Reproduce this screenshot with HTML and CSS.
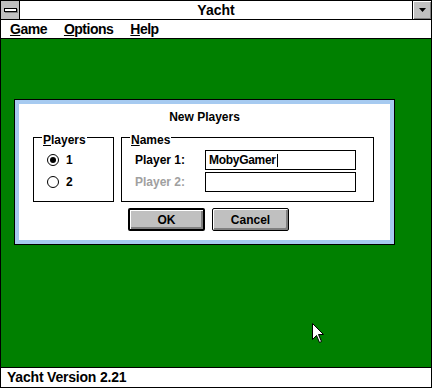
FILE: index.html
```html
<!DOCTYPE html>
<html lang="en">

<head>
    <title>Yacht</title>
    <link rel="stylesheet" href="styles.css">
</head>

<body>

    <div class="window">
        <div class="titlebar">
            <div class="sysbox"><span class="sysbar"></span></div>
            <div class="caption">Yacht</div>
            <div class="minbox">
                <svg width="7" height="4" viewBox="0 0 7 4"><polygon points="0,0 7,0 3.5,4" fill="#000"/></svg>
            </div>
        </div>

        <div class="menubar">
            <span class="menu"><u>G</u>ame</span>
            <span class="menu"><u>O</u>ptions</span>
            <span class="menu"><u>H</u>elp</span>
        </div>

        <div class="client">
            <div class="dialog">
                <div class="dialog-title">New Players</div>

                <div class="groups">
                    <div class="group players">
                        <span class="group-label"><u>P</u>layers</span>
                        <div class="row">
                            <span class="radio checked"></span>
                            <span>1</span>
                        </div>
                        <div class="row">
                            <span class="radio"></span>
                            <span>2</span>
                        </div>
                    </div>

                    <div class="group names">
                        <span class="group-label"><u>N</u>ames</span>
                        <div class="row">
                            <span class="field-label">Player 1:</span>
                            <div class="input">MobyGamer<span class="caret"></span></div>
                        </div>
                        <div class="row">
                            <span class="field-label disabled">Player 2:</span>
                            <div class="input"></div>
                        </div>
                    </div>
                </div>

                <div class="buttons">
                    <div class="btn default">OK</div>
                    <div class="btn">Cancel</div>
                </div>
            </div>

            <svg class="cursor" width="13" height="21" viewBox="0 0 13 21">
                <polygon points="0.5,0.5 0.5,16.5 4.5,12.5 7.5,19.5 9.5,18.5 6.5,11.5 11.5,11.5" fill="#fff" stroke="#000" stroke-width="1"/>
            </svg>
        </div>

        <div class="status">Yacht Version 2.21</div>
    </div>

</body>

</html>
```

FILE: styles.css
```css
body {
    margin: 0;
    font-family: "Liberation Sans", Arial, sans-serif;
    font-weight: bold;
    background-color: #008000;
}

.window {
    width: 432px;
    height: 388px;
    box-sizing: border-box;
    border: 1px solid #000;
    display: flex;
    flex-direction: column;
    background-color: #008000;
}

.titlebar {
    height: 18px;
    display: flex;
    background-color: #fff;
    border-bottom: 1px solid #000;
}

.sysbox {
    width: 18px;
    background-color: #c0c0c0;
    border-right: 1px solid #000;
    display: flex;
    justify-content: center;
    align-items: center;
}

.sysbar {
    width: 11px;
    height: 2px;
    background-color: #fff;
    border: 1px solid #000;
    box-shadow: 1px 1px 0 #808080;
}

.caption {
    flex: 1;
    text-align: center;
    font-size: 14px;
    line-height: 18px;
}

.minbox {
    width: 18px;
    background-color: #c0c0c0;
    border-left: 1px solid #000;
    box-shadow: inset 1px 1px #fff, inset -1px -1px #808080;
    display: flex;
    justify-content: center;
    align-items: center;
}

.minbox svg {
    display: block;
}

.menubar {
    height: 18px;
    display: flex;
    gap: 17px;
    padding-left: 9px;
    background-color: #fff;
    border-bottom: 1px solid #000;
    font-size: 14px;
    line-height: 18px;
    letter-spacing: -0.5px;
}

.client {
    flex: 1;
    position: relative;
    padding: 60px 0 0 13px;
}

.dialog {
    width: 381px;
    height: 146px;
    box-sizing: border-box;
    border: 1px solid #000;
    background-color: #fff;
    box-shadow: inset 0 0 0 4px #a6caf0;
    padding-top: 10px;
    font-size: 12px;
    line-height: 14px;
}

.dialog-title {
    text-align: center;
}

.groups {
    display: flex;
    gap: 7px;
    margin: 13px 0 0 18px;
}

.group {
    position: relative;
    height: 65px;
    box-sizing: border-box;
    border: 1px solid #000;
    padding: 11px 0 0 13px;
}

.players {
    width: 81px;
}

.names {
    width: 253px;
}

.group-label {
    position: absolute;
    top: -5px;
    left: 8px;
    padding: 0 1px;
    background-color: #fff;
}

.row {
    height: 22px;
    display: flex;
    align-items: center;
}

.radio {
    width: 12px;
    height: 12px;
    box-sizing: border-box;
    border: 1px solid #000;
    border-radius: 50%;
    margin-right: 7px;
    display: flex;
    justify-content: center;
    align-items: center;
}

.radio.checked::after {
    content: "";
    width: 6px;
    height: 6px;
    border-radius: 50%;
    background-color: #000;
}

.field-label {
    width: 70px;
}

.disabled {
    color: #a0a0a0;
}

.input {
    width: 151px;
    height: 20px;
    box-sizing: border-box;
    border: 1px solid #000;
    padding-left: 3px;
    display: flex;
    align-items: center;
    letter-spacing: -0.3px;
}

.caret {
    width: 0;
    height: 13px;
    border-left: 1px solid #000;
    margin-left: 1px;
}

.buttons {
    display: flex;
    gap: 7px;
    margin: 6px 0 0 113px;
}

.btn {
    width: 77px;
    height: 23px;
    box-sizing: border-box;
    border: 1px solid #000;
    border-radius: 2px;
    background-color: #c0c0c0;
    box-shadow: inset 1px 1px #fff, inset -2px -2px #808080;
    display: flex;
    justify-content: center;
    align-items: center;
}

.btn.default {
    border-width: 2px;
}

.cursor {
    position: absolute;
    left: 311px;
    top: 284px;
}

.status {
    height: 19px;
    background-color: #fff;
    border-top: 1px solid #000;
    padding-left: 6px;
    font-size: 14px;
    line-height: 19px;
    letter-spacing: -0.2px;
}
```
